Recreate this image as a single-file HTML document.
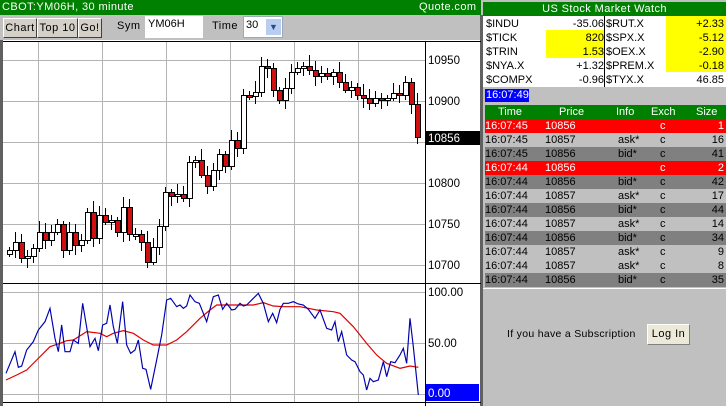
<!DOCTYPE html>
<html><head><meta charset="utf-8"><style>
*{margin:0;padding:0;box-sizing:border-box}
body{width:726px;height:406px;background:#c0c0c0;position:relative;overflow:hidden;font-family:"Liberation Sans",sans-serif;font-size:11px;color:#000}
.a{position:absolute;white-space:nowrap}
.btn{position:absolute;top:18px;height:20px;border:1px solid;border-color:#fff #404040 #404040 #fff;background:#d4d0c8;font-size:11px;line-height:18px;text-align:center;letter-spacing:.5px}
.q{position:absolute;height:14px;line-height:14px;font-size:11px;white-space:nowrap}
.row{position:absolute;left:485px;width:241px;height:14px;line-height:14px;font-size:11px}
.row span{position:absolute}
</style></head><body>
<div class="a" style="left:0;top:0;width:481px;height:15px;background:#008000;color:#fff;line-height:14px;font-size:11px;padding-left:2px;letter-spacing:.4px">CBOT:YM06H, 30 minute<span style="position:absolute;left:419px">Quote.com&nbsp; A</span></div>
<div class="btn" style="left:3px;width:34px">Chart</div>
<div class="btn" style="left:37px;width:41px">Top 10</div>
<div class="btn" style="left:78px;width:24px">Go!</div>
<div class="a" style="left:117px;top:20px;letter-spacing:.5px">Sym</div>
<div class="a" style="left:145px;top:16px;width:58px;height:22px;background:#fff;padding:2px 0 0 3px">YM06H</div>
<div class="a" style="left:212px;top:20px;letter-spacing:.5px">Time</div>
<div class="a" style="left:243px;top:16px;width:40px;height:22px;background:#fff;border:1px solid #9ab;padding:2px 0 0 2px">30<div class="a" style="left:22px;top:2px;width:15px;height:16px;background:#b8cdf0;color:#2a4a8a;font-size:9px;text-align:center;line-height:16px">&#9660;</div></div>
<div class="a" style="left:0;top:40px;width:481px;height:366px;background:#fff;border-left:3px solid #606060"></div>
<div class="a" style="left:480px;top:15px;width:3px;height:391px;background:#606060"></div>
<svg class="a" style="left:0;top:0" width="481" height="406">
<g stroke="#b4b4b4" stroke-width="1">
<line x1="38.5" y1="42" x2="38.5" y2="402"/><line x1="102.5" y1="42" x2="102.5" y2="402"/><line x1="166.5" y1="42" x2="166.5" y2="402"/><line x1="230.5" y1="42" x2="230.5" y2="402"/><line x1="294.5" y1="42" x2="294.5" y2="402"/><line x1="358.5" y1="42" x2="358.5" y2="402"/>
<line x1="3" y1="60.5" x2="425" y2="60.5"/><line x1="3" y1="101.5" x2="425" y2="101.5"/><line x1="3" y1="142.5" x2="425" y2="142.5"/><line x1="3" y1="183.5" x2="425" y2="183.5"/><line x1="3" y1="224.5" x2="425" y2="224.5"/><line x1="3" y1="265.5" x2="425" y2="265.5"/>
<line x1="3" y1="292.5" x2="425" y2="292.5"/><line x1="3" y1="343.5" x2="425" y2="343.5"/><line x1="3" y1="394.5" x2="425" y2="394.5"/>
</g>
<line x1="3" y1="41.5" x2="481" y2="41.5" stroke="#000"/>
<line x1="3" y1="283.5" x2="481" y2="283.5" stroke="#000"/>
<line x1="425.5" y1="41" x2="425.5" y2="406" stroke="#000"/>
<line x1="3" y1="402.5" x2="481" y2="402.5" stroke="#000"/>
<g font-size="11.5" font-family="Liberation Sans,sans-serif">
<text x="428" y="64">10950</text><text x="428" y="105">10900</text><text x="428" y="187">10800</text><text x="428" y="228">10750</text><text x="428" y="269">10700</text>
<rect x="425" y="131" width="55" height="14" fill="#000"/><text x="428" y="142" fill="#fff">10856</text>
<text x="428" y="296">100.00</text><text x="428" y="347">50.00</text>
<rect x="426" y="384" width="53" height="17" fill="#0000ff"/><text x="428" y="397" fill="#fff">0.00</text>
</g>
<g id="cd"></g>
<g transform="translate(0,280) scale(0.33333)" fill="none" stroke-width="3.5">
<polyline stroke="#d00" points="18,300 50,285 80,270 110,240 150,200 180,190 200,182 220,180 260,155 300,160 320,170 340,160 370,152 400,160 430,180 460,195 500,195 530,180 560,155 600,115 630,90 650,75 700,75 760,75 790,68 820,78 850,80 900,80 950,90 1000,95 1020,100 1060,140 1100,190 1130,225 1160,250 1200,265 1230,258 1255,262"/>
<polyline stroke="#0000b0" points="18,280 45,215 55,262 65,258 80,210 100,185 115,150 135,125 150,85 165,175 175,215 185,135 195,215 210,215 220,180 235,190 248,70 258,130 270,200 285,175 295,212 308,135 320,130 330,75 340,140 352,190 368,65 380,195 392,220 405,210 415,180 428,265 438,268 452,328 470,240 485,165 500,60 512,55 530,80 540,75 550,85 560,78 570,45 585,65 598,70 610,100 620,125 640,50 655,45 668,88 680,70 695,90 705,88 720,70 730,78 740,75 760,55 775,40 790,70 805,125 818,100 830,128 840,88 850,70 865,70 880,65 895,72 910,75 925,88 945,115 960,90 980,145 995,150 1005,125 1015,185 1025,155 1040,225 1055,240 1065,245 1080,275 1090,285 1100,330 1110,295 1120,305 1135,300 1150,245 1160,290 1172,245 1185,248 1200,225 1210,205 1220,250 1230,115 1240,200 1255,345"/>
</g>
</svg>
<script>
var c=[250,242,258,256,248,232,240,232,224,250,232,245,240,212,238,215,222,220,232,207,234,234,242,262,247,226,192,196,194,198,162,160,175,186,170,154,166,140,148,95,96,92,66,68,90,100,88,72,68,66,70,76,73,76,72,82,90,87,95,98,103,98,100,98,93,95,82,104,137];
var h='',o=254;
for(var i=0;i<c.length;i++){var x=9+6*i,cl=c[i],t=Math.min(o,cl),b=Math.max(o,cl);if(b-t<2)b=t+2;
var hi=t-3-((i*7)%9),lo=b+3+((i*5)%8);
h+='<line x1="'+(x+.5)+'" y1="'+hi+'" x2="'+(x+.5)+'" y2="'+lo+'" stroke="#000"/>';
h+='<rect x="'+(x-2)+'.5" y="'+t+'.5" width="5" height="'+(b-t)+'" fill="'+(cl>o?'#d01010':'#fff')+'" stroke="#000"/>';o=cl;}
document.getElementById('cd').innerHTML=h;
</script>
<div class="a" style="left:483px;top:2px;width:243px;height:14px;background:#008000;color:#fff;text-align:center;line-height:14px;font-size:11px;letter-spacing:.4px">US Stock Market Watch</div>
<div class="a" style="left:483px;top:16px;width:243px;height:71px;background:#fff"></div>
<div class="a" style="left:546px;top:30px;width:59px;height:28px;background:#ffff00"></div>
<div class="a" style="left:666px;top:16px;width:60px;height:56px;background:#ffff00"></div>
<div class="a" style="left:604px;top:16px;width:1px;height:71px;background:#000"></div>
<div class="q" style="left:486px;top:17px">$INDU</div><div class="q" style="left:486px;top:31px">$TICK</div><div class="q" style="left:486px;top:45px">$TRIN</div><div class="q" style="left:486px;top:59px">$NYA.X</div><div class="q" style="left:486px;top:73px">$COMPX</div>
<div class="q" style="right:122px;top:17px">-35.06</div><div class="q" style="right:122px;top:31px">820</div><div class="q" style="right:122px;top:45px">1.53</div><div class="q" style="right:122px;top:59px">+1.32</div><div class="q" style="right:122px;top:73px">-0.96</div>
<div class="q" style="left:606px;top:17px">$RUT.X</div><div class="q" style="left:606px;top:31px">$SPX.X</div><div class="q" style="left:606px;top:45px">$OEX.X</div><div class="q" style="left:606px;top:59px">$PREM.X</div><div class="q" style="left:606px;top:73px">$TYX.X</div>
<div class="q" style="right:2px;top:17px">+2.33</div><div class="q" style="right:2px;top:31px">-5.12</div><div class="q" style="right:2px;top:45px">-2.90</div><div class="q" style="right:2px;top:59px">-0.18</div><div class="q" style="right:2px;top:73px">46.85</div>
<div class="a" style="left:485px;top:89px;width:44px;height:13px;background:#0000ff;color:#fff;line-height:13px;font-size:11px;padding-left:1px">16:07:49</div>
<div class="a" style="left:485px;top:105px;width:241px;height:14px;background:#008000;color:#fff;line-height:14px;font-size:11px">
<span class="a" style="left:13px">Time</span><span class="a" style="left:74px">Price</span><span class="a" style="left:131px">Info</span><span class="a" style="left:166px">Exch</span><span class="a" style="left:211px">Size</span></div>
<div id="tb"></div>
<script>
var r=[["16:07:45","10856","","1","r"],["16:07:45","10857","ask*","16","l"],["16:07:45","10856","bid*","41","d"],["16:07:44","10856","","2","r"],["16:07:44","10856","bid*","42","d"],["16:07:44","10857","ask*","17","l"],["16:07:44","10856","bid*","44","d"],["16:07:44","10857","ask*","14","l"],["16:07:44","10856","bid*","34","d"],["16:07:44","10857","ask*","9","l"],["16:07:44","10857","ask*","8","l"],["16:07:44","10856","bid*","35","d"]];
var s='';for(var i=0;i<r.length;i++){var q=r[i],bg=q[4]=='r'?'#ff0000':q[4]=='d'?'#808080':'#c0c0c0',fg=q[4]=='r'?'#fff':'#000';
s+='<div class="row" style="top:'+(119+i*14)+'px;background:'+bg+';color:'+fg+'"><span style="left:0">'+q[0]+'</span><span style="left:60px">'+q[1]+'</span><span style="left:133px">'+q[2]+'</span><span style="left:175px">c</span><span style="right:2px">'+q[3]+'</span></div>';}
document.getElementById('tb').innerHTML=s;
</script>
<div class="a" style="left:483px;top:288px;width:243px;height:1px;background:#fff"></div>
<div class="a" style="left:507px;top:328px;letter-spacing:.3px;font-size:10.5px">If you have a Subscription</div>
<div class="a" style="left:647px;top:324px;width:43px;height:21px;background:#ece9d8;border:1px solid;border-color:#fff #808080 #808080 #fff;text-align:center;line-height:19px;letter-spacing:.5px">Log In</div>
</body></html>
